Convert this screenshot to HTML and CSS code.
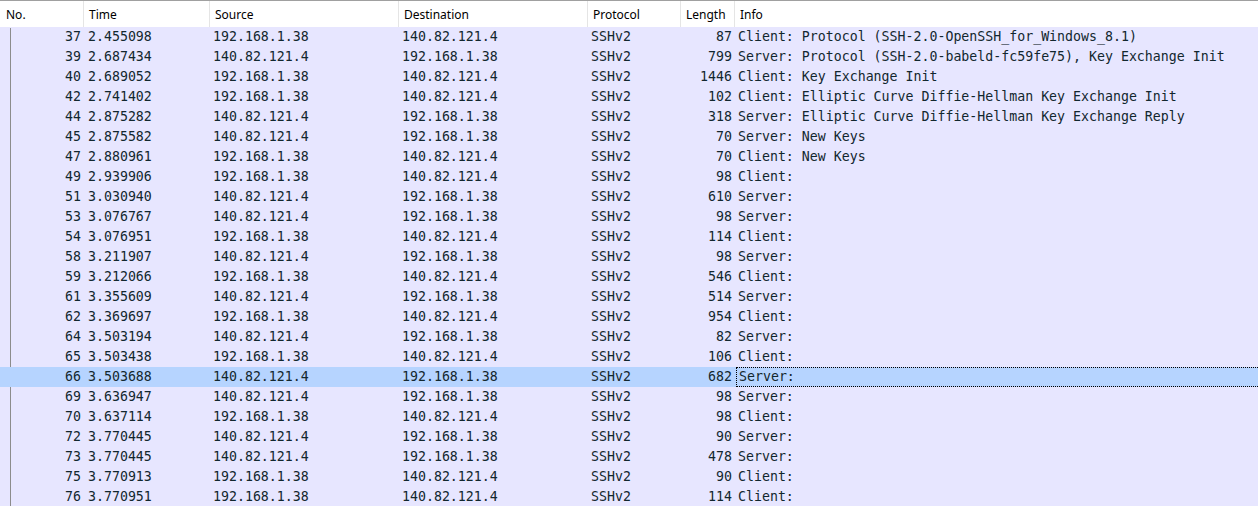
FILE: index.html
```html
<!DOCTYPE html>
<html>
<head>
<meta charset="utf-8">
<link rel="stylesheet" href="styles.css">
</head>
<body>
<div class="packet-list">
  <div class="hdr">
    <div class="hc">No.</div>
    <div class="hc">Time</div>
    <div class="hc">Source</div>
    <div class="hc">Destination</div>
    <div class="hc">Protocol</div>
    <div class="hc">Length</div>
    <div class="hc last">Info</div>
  </div>
  <div class="rows">
    <div class="row"><div class="c num">37</div><div class="c t">2.455098</div><div class="c">192.168.1.38</div><div class="c">140.82.121.4</div><div class="c">SSHv2</div><div class="c num">87</div><div class="c info">Client: Protocol (SSH-2.0-OpenSSH_for_Windows_8.1)</div></div>
    <div class="row"><div class="c num">39</div><div class="c t">2.687434</div><div class="c">140.82.121.4</div><div class="c">192.168.1.38</div><div class="c">SSHv2</div><div class="c num">799</div><div class="c info">Server: Protocol (SSH-2.0-babeld-fc59fe75), Key Exchange Init</div></div>
    <div class="row"><div class="c num">40</div><div class="c t">2.689052</div><div class="c">192.168.1.38</div><div class="c">140.82.121.4</div><div class="c">SSHv2</div><div class="c num">1446</div><div class="c info">Client: Key Exchange Init</div></div>
    <div class="row"><div class="c num">42</div><div class="c t">2.741402</div><div class="c">192.168.1.38</div><div class="c">140.82.121.4</div><div class="c">SSHv2</div><div class="c num">102</div><div class="c info">Client: Elliptic Curve Diffie-Hellman Key Exchange Init</div></div>
    <div class="row"><div class="c num">44</div><div class="c t">2.875282</div><div class="c">140.82.121.4</div><div class="c">192.168.1.38</div><div class="c">SSHv2</div><div class="c num">318</div><div class="c info">Server: Elliptic Curve Diffie-Hellman Key Exchange Reply</div></div>
    <div class="row"><div class="c num">45</div><div class="c t">2.875582</div><div class="c">140.82.121.4</div><div class="c">192.168.1.38</div><div class="c">SSHv2</div><div class="c num">70</div><div class="c info">Server: New Keys</div></div>
    <div class="row"><div class="c num">47</div><div class="c t">2.880961</div><div class="c">192.168.1.38</div><div class="c">140.82.121.4</div><div class="c">SSHv2</div><div class="c num">70</div><div class="c info">Client: New Keys</div></div>
    <div class="row"><div class="c num">49</div><div class="c t">2.939906</div><div class="c">192.168.1.38</div><div class="c">140.82.121.4</div><div class="c">SSHv2</div><div class="c num">98</div><div class="c info">Client:</div></div>
    <div class="row"><div class="c num">51</div><div class="c t">3.030940</div><div class="c">140.82.121.4</div><div class="c">192.168.1.38</div><div class="c">SSHv2</div><div class="c num">610</div><div class="c info">Server:</div></div>
    <div class="row"><div class="c num">53</div><div class="c t">3.076767</div><div class="c">140.82.121.4</div><div class="c">192.168.1.38</div><div class="c">SSHv2</div><div class="c num">98</div><div class="c info">Server:</div></div>
    <div class="row"><div class="c num">54</div><div class="c t">3.076951</div><div class="c">192.168.1.38</div><div class="c">140.82.121.4</div><div class="c">SSHv2</div><div class="c num">114</div><div class="c info">Client:</div></div>
    <div class="row"><div class="c num">58</div><div class="c t">3.211907</div><div class="c">140.82.121.4</div><div class="c">192.168.1.38</div><div class="c">SSHv2</div><div class="c num">98</div><div class="c info">Server:</div></div>
    <div class="row"><div class="c num">59</div><div class="c t">3.212066</div><div class="c">192.168.1.38</div><div class="c">140.82.121.4</div><div class="c">SSHv2</div><div class="c num">546</div><div class="c info">Client:</div></div>
    <div class="row"><div class="c num">61</div><div class="c t">3.355609</div><div class="c">140.82.121.4</div><div class="c">192.168.1.38</div><div class="c">SSHv2</div><div class="c num">514</div><div class="c info">Server:</div></div>
    <div class="row"><div class="c num">62</div><div class="c t">3.369697</div><div class="c">192.168.1.38</div><div class="c">140.82.121.4</div><div class="c">SSHv2</div><div class="c num">954</div><div class="c info">Client:</div></div>
    <div class="row"><div class="c num">64</div><div class="c t">3.503194</div><div class="c">140.82.121.4</div><div class="c">192.168.1.38</div><div class="c">SSHv2</div><div class="c num">82</div><div class="c info">Server:</div></div>
    <div class="row"><div class="c num">65</div><div class="c t">3.503438</div><div class="c">192.168.1.38</div><div class="c">140.82.121.4</div><div class="c">SSHv2</div><div class="c num">106</div><div class="c info">Client:</div></div>
    <div class="row sel"><div class="c num">66</div><div class="c t">3.503688</div><div class="c">140.82.121.4</div><div class="c">192.168.1.38</div><div class="c">SSHv2</div><div class="c num">682</div><div class="c info">Server:</div></div>
    <div class="row"><div class="c num">69</div><div class="c t">3.636947</div><div class="c">140.82.121.4</div><div class="c">192.168.1.38</div><div class="c">SSHv2</div><div class="c num">98</div><div class="c info">Server:</div></div>
    <div class="row"><div class="c num">70</div><div class="c t">3.637114</div><div class="c">192.168.1.38</div><div class="c">140.82.121.4</div><div class="c">SSHv2</div><div class="c num">98</div><div class="c info">Client:</div></div>
    <div class="row"><div class="c num">72</div><div class="c t">3.770445</div><div class="c">140.82.121.4</div><div class="c">192.168.1.38</div><div class="c">SSHv2</div><div class="c num">90</div><div class="c info">Server:</div></div>
    <div class="row"><div class="c num">73</div><div class="c t">3.770445</div><div class="c">140.82.121.4</div><div class="c">192.168.1.38</div><div class="c">SSHv2</div><div class="c num">478</div><div class="c info">Server:</div></div>
    <div class="row"><div class="c num">75</div><div class="c t">3.770913</div><div class="c">192.168.1.38</div><div class="c">140.82.121.4</div><div class="c">SSHv2</div><div class="c num">90</div><div class="c info">Client:</div></div>
    <div class="row"><div class="c num">76</div><div class="c t">3.770951</div><div class="c">192.168.1.38</div><div class="c">140.82.121.4</div><div class="c">SSHv2</div><div class="c num">114</div><div class="c info">Client:</div></div>
  </div>
</div>
</body>
</html>
```
FILE: styles.css
```css
html, body {
  margin: 0;
  padding: 0;
  background: #e7e6ff;
  overflow: hidden;
}
.packet-list {
  width: 1258px;
  height: 506px;
  overflow: hidden;
}
.hdr, .row {
  display: grid;
  grid-template-columns: 84px 126px 189px 189px 93px 54px 1fr;
}
.hdr {
  height: 27px;
  box-sizing: border-box;
  border-top: 1px solid #a0a0a0;
  background: #ffffff;
}
.hc {
  font-family: "Noto Sans", "Open Sans", sans-serif;
  font-size: 12px;
  color: #000;
  line-height: 26px;
  padding: 1px 0 0 5px;
  height: 26px;
  box-sizing: border-box;
  border-right: 1px solid #e5e5e5;
  white-space: nowrap;
  overflow: hidden;
}
.hc:first-child { padding-left: 6px; }
.hc.last { border-right: none; }
.rows {
  background: linear-gradient(#8c8c8c, #8c8c8c) 10px 1px / 1px 100% no-repeat, #e7e6ff;
}
.row {
  height: 20px;
}
.c {
  font-family: "DejaVu Sans Mono", "Liberation Mono", monospace;
  font-size: 13.25px;
  line-height: 20px;
  color: #12272e;
  padding: 0 3px;
  white-space: nowrap;
  overflow: hidden;
  box-sizing: border-box;
}
.c.t { padding-left: 4px; }
.c.num { text-align: right; }
.c.info { overflow: visible; }
.row.sel {
  background: #b6d4ff;
}
.row.sel .c.info {
  margin-left: 1px;
  padding-left: 2px;
  border: 1px dotted #000;
  border-right: none;
  line-height: 18px;
  height: 20px;
}
```
